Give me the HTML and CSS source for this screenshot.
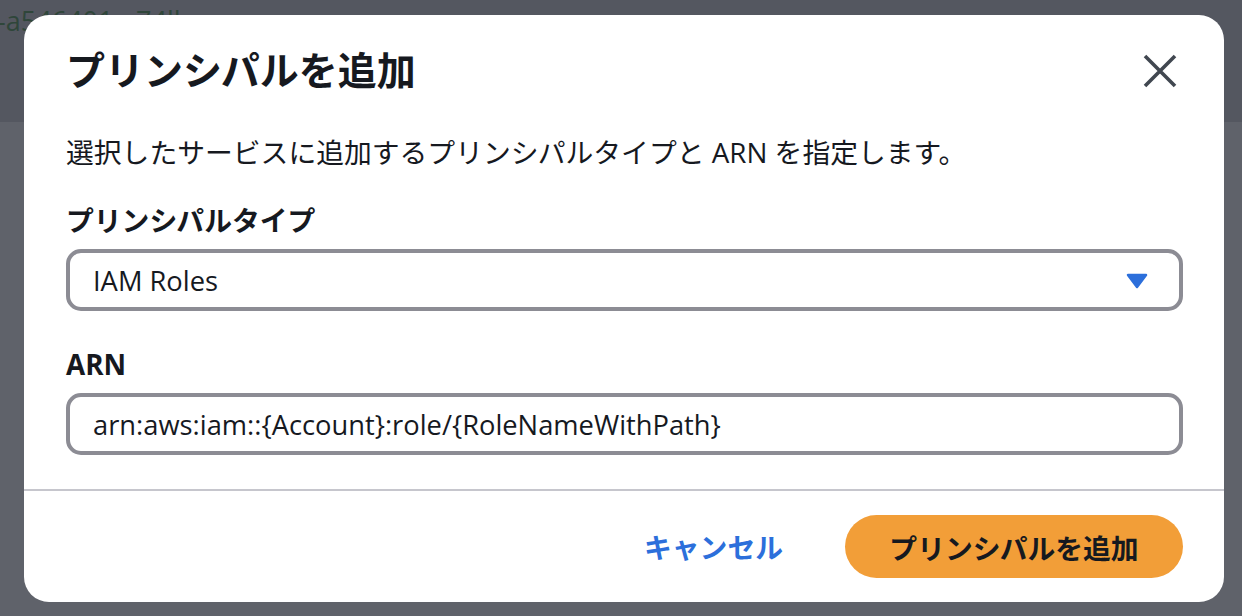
FILE: index.html
```html
<!DOCTYPE html>
<html lang="ja">
<head>
<meta charset="utf-8">
<title>プリンシパルを追加</title>
<link rel="stylesheet" href="styles.css">
</head>
<body>
<div class="page">
  <div class="page-top"><span class="crumb">-a546401 - 74ll</span></div>
  <div class="page-rest"></div>
</div>
<div class="modal" role="dialog" aria-labelledby="dlg-title">
  <div class="modal-body">
    <div class="modal-header">
      <h2 class="modal-title" id="dlg-title">プリンシパルを追加</h2>
      <button class="close-btn" aria-label="閉じる">
        <svg width="34" height="34" viewBox="0 0 34 34"><path d="M2 2 L32 32 M32 2 L2 32" stroke="#414750" stroke-width="3.6" stroke-linecap="butt" fill="none"/></svg>
      </button>
    </div>
    <p class="modal-desc">選択したサービスに追加するプリンシパルタイプと ARN を指定します。</p>
    <div class="field">
      <label class="field-label">プリンシパルタイプ</label>
      <div class="select">
        <span class="select-value">IAM Roles</span>
        <svg class="caret" width="22" height="16" viewBox="0 0 22 16"><polygon points="2,2 20,2 11,14" fill="#2c6fdb" stroke="#2c6fdb" stroke-width="2.5" stroke-linejoin="round"/></svg>
      </div>
    </div>
    <div class="field">
      <label class="field-label">ARN</label>
      <div class="input">arn:aws:iam::{Account}:role/{RoleNameWithPath}</div>
    </div>
  </div>
  <div class="modal-footer">
    <button class="btn-link">キャンセル</button>
    <button class="btn-primary">プリンシパルを追加</button>
  </div>
</div>
</body>
</html>
```

FILE: styles.css
```css
* { box-sizing: border-box; }
html, body { margin: 0; padding: 0; }
body {
  width: 1242px;
  height: 616px;
  overflow: hidden;
  position: relative;
  font-family: "Open Sans", "Noto Sans CJK JP", sans-serif;
  color: #16191f;
  background: #5f626a;
}
.page { display: flex; flex-direction: column; height: 100%; }
.page-top {
  height: 122px;
  background: #545760;
  position: relative;
  overflow: hidden;
}
.crumb {
  position: absolute;
  left: -3px;
  top: 2px;
  font-size: 27px;
  color: #2f463a;
  white-space: nowrap;
}
.page-rest { flex: 1; background: #5f626a; }

.modal {
  position: absolute;
  left: 24px;
  top: 15px;
  width: 1200px;
  height: 587px;
  background: #ffffff;
  border-radius: 25px;
  display: flex;
  flex-direction: column;
  overflow: hidden;
}
.modal-body {
  padding: 31px 41px 34px 42px;
  border-bottom: 2px solid #c6c6cd;
}
.modal-header {
  display: flex;
  align-items: center;
  justify-content: space-between;
  height: 48px;
}
.modal-title {
  margin: 0;
  font-family: "Open Sans", "Noto Sans CJK JP", sans-serif;
  font-size: 39px;
  font-weight: 700;
  line-height: 48px;
  color: #16191f;
}
.close-btn {
  border: 0;
  background: none;
  padding: 0;
  width: 34px;
  height: 34px;
  margin-right: 6px;
  margin-top: 2px;
  display: flex;
}
.modal-desc {
  margin: 38px 0 0 0;
  font-size: 27.8px;
  line-height: 40px;
  color: #16191f;
}
.field { display: flex; flex-direction: column; }
.field + .field { margin-top: 33px; }
.modal-desc + .field { margin-top: 28px; }
.field-label {
  font-size: 27.8px;
  font-weight: 700;
  line-height: 40px;
  margin-bottom: 9px;
}
.select, .input {
  height: 62px;
  border: 4px solid #8c8c94;
  border-radius: 15px;
  display: flex;
  align-items: center;
  padding: 0 28px 0 23px;
  font-size: 27.3px;
  color: #16191f;
}
.select { justify-content: space-between; }
.caret { margin-right: 3px; margin-top: 1px; }

.modal-footer {
  flex: 1;
  display: flex;
  justify-content: flex-end;
  align-items: flex-start;
  padding: 24px 41px 0 0;
  gap: 62px;
}
.btn-link {
  border: 0;
  background: none;
  padding: 0;
  height: 62px;
  font-family: "Open Sans", "Noto Sans CJK JP", sans-serif;
  font-size: 27.8px;
  font-weight: 700;
  color: #2c6fdb;
}
.btn-primary {
  border: 0;
  height: 63px;
  width: 338px;
  border-radius: 32px;
  background: #f29e38;
  font-family: "Open Sans", "Noto Sans CJK JP", sans-serif;
  font-size: 27.8px;
  font-weight: 700;
  color: #16191f;
  padding: 0;
}
```
